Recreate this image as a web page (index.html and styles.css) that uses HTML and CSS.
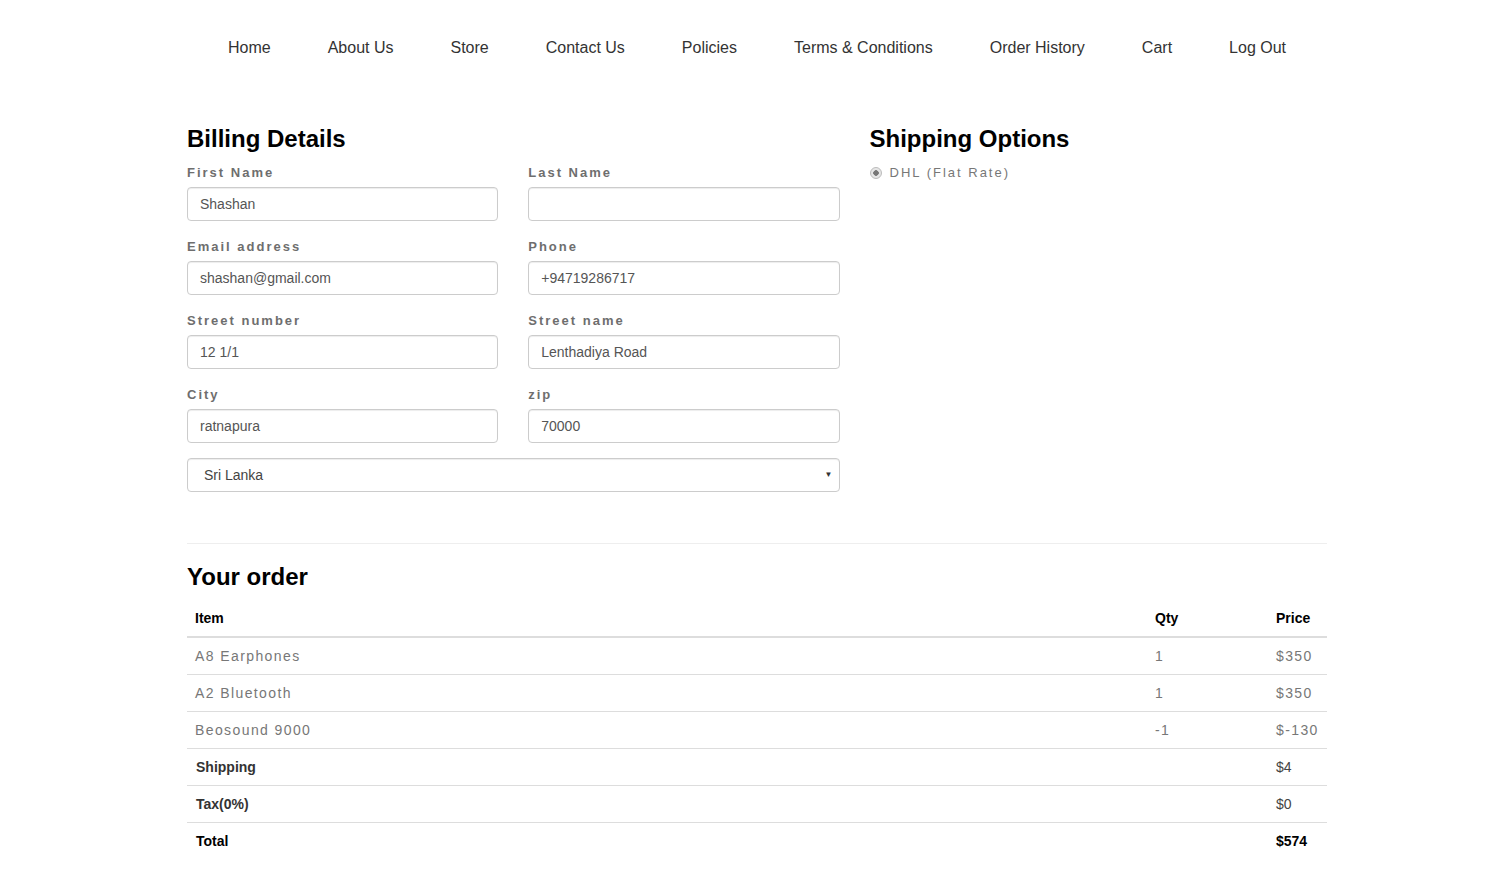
FILE: index.html
```html
<!DOCTYPE html>
<html lang="en">
<head>
<meta charset="utf-8">
<title>Checkout</title>
<link rel="stylesheet" href="styles.css">
</head>
<body>
<div class="container">
  <nav class="nav">
    <a href="#">Home</a>
    <a href="#">About Us</a>
    <a href="#">Store</a>
    <a href="#">Contact Us</a>
    <a href="#">Policies</a>
    <a href="#">Terms &amp; Conditions</a>
    <a href="#">Order History</a>
    <a href="#">Cart</a>
    <a href="#">Log Out</a>
  </nav>

  <div class="checkout">
    <section class="billing">
      <h2>Billing Details</h2>
      <div class="form-grid">
        <div class="group"><label>First Name</label><div class="input">Shashan</div></div>
        <div class="group"><label>Last Name</label><div class="input"></div></div>
        <div class="group"><label>Email address</label><div class="input">shashan@gmail.com</div></div>
        <div class="group"><label>Phone</label><div class="input">+94719286717</div></div>
        <div class="group"><label>Street number</label><div class="input">12 1/1</div></div>
        <div class="group"><label>Street name</label><div class="input">Lenthadiya Road</div></div>
        <div class="group"><label>City</label><div class="input">ratnapura</div></div>
        <div class="group"><label>zip</label><div class="input">70000</div></div>
      </div>
      <div class="select"><span>Sri Lanka</span><span class="arrow">&#9660;</span></div>
    </section>
    <section class="shipping">
      <h2>Shipping Options</h2>
      <div class="radio-row"><span class="radio"></span><span class="radio-label">DHL (Flat Rate)</span></div>
    </section>
  </div>

  <hr class="divider">

  <section class="order">
    <h2 class="order-title">Your order</h2>
    <table class="order-table">
      <colgroup><col><col class="c-qty"><col class="c-price"></colgroup>
      <thead>
        <tr><th>Item</th><th>Qty</th><th>Price</th></tr>
      </thead>
      <tbody>
        <tr class="item"><td>A8 Earphones</td><td>1</td><td>$350</td></tr>
        <tr class="item"><td>A2 Bluetooth</td><td>1</td><td>$350</td></tr>
        <tr class="item"><td>Beosound 9000</td><td>-1</td><td>$-130</td></tr>
        <tr class="sum"><td>Shipping</td><td></td><td>$4</td></tr>
        <tr class="sum"><td>Tax(0%)</td><td></td><td>$0</td></tr>
        <tr class="total"><td>Total</td><td></td><td>$574</td></tr>
      </tbody>
    </table>
  </section>
</div>
</body>
</html>
```

FILE: styles.css
```css
* { box-sizing: border-box; }
html, body { margin: 0; padding: 0; background: #fff; }
body {
  font-family: "Liberation Sans", Arial, sans-serif;
  font-size: 14px;
  line-height: 20px;
  color: #333;
}
.container {
  width: 1140px;
  margin-left: calc(50% - 563px);
}
.nav {
  display: flex;
  justify-content: center;
  padding-top: 28px;
}
.nav a {
  display: block;
  padding: 10px 28.5px;
  font-size: 16px;
  line-height: 20px;
  color: #333;
  text-decoration: none;
}
.checkout {
  display: flex;
  gap: 30px;
  margin-top: 58px;
}
.billing { width: 652.5px; }
.shipping { width: 457.5px; }
h2 {
  margin: 0 0 10px;
  font-size: 24px;
  line-height: 26.4px;
  font-weight: bold;
  color: #000;
}
.order-title { margin-bottom: 9px; }
.form-grid {
  display: grid;
  grid-template-columns: 1fr 1fr;
  column-gap: 30px;
}
.group { margin-bottom: 15px; }
.group label {
  display: block;
  font-size: 13px;
  font-weight: bold;
  letter-spacing: 2px;
  color: #6e6e6e;
  line-height: 20px;
  padding-top: 1px;
  margin-bottom: 4px;
}
.input {
  height: 34px;
  border: 1px solid #ccc;
  border-radius: 4px;
  box-shadow: inset 0 1px 1px rgba(0,0,0,.075);
  padding: 6px 12px;
  font-size: 14px;
  line-height: 20px;
  color: #555;
}
.select {
  display: flex;
  justify-content: space-between;
  align-items: center;
  height: 34px;
  border: 1px solid #ccc;
  border-radius: 4px;
  box-shadow: inset 0 1px 1px rgba(0,0,0,.075);
  padding: 0 6px 0 16px;
  font-size: 14px;
  color: #444;
}
.select .arrow { font-size: 8px; color: #333; }
.radio-row {
  display: flex;
  align-items: center;
  height: 20px;
  padding-top: 1px;
}
.radio {
  width: 12px;
  height: 12px;
  border-radius: 50%;
  border: 1px solid #bbb;
  background: radial-gradient(circle, #777 0 2.5px, #e6e6e6 3px);
  margin-right: 8px;
}
.radio-label {
  font-size: 13px;
  letter-spacing: 2px;
  color: #777;
}
.divider {
  border: 0;
  border-top: 1px solid #eee;
  margin: 51px 0 20px;
}
.order-table {
  width: 100%;
  border-collapse: collapse;
  table-layout: fixed;
}
.c-qty { width: 121px; }
.c-price { width: 59px; }
.order-table th {
  text-align: left;
  font-weight: bold;
  color: #000;
  padding: 8px;
  line-height: 20px;
  border-bottom: 2px solid #ddd;
}
.order-table td {
  padding: 8px;
  line-height: 20px;
  border-top: 1px solid #ddd;
  white-space: nowrap;
}
.order-table thead + tbody tr:first-child td { border-top: 0; }
.item td {
  color: #777;
  letter-spacing: 1.4px;
}
.sum td { color: #444; }
.sum td:first-child { font-weight: bold; color: #333; padding-left: 9px; }
.total td { font-weight: bold; color: #000; }
.total td:first-child { padding-left: 9px; }
```
